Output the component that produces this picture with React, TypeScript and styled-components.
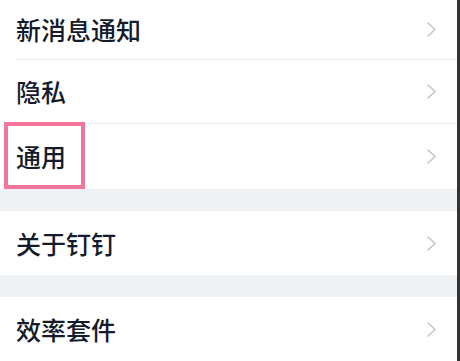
import React from "react";
import styled, { createGlobalStyle } from "styled-components";

const Global = createGlobalStyle`
  html, body { margin: 0; padding: 0; background: #ffffff; }
  body { font-family: "Noto Sans CJK SC", "Noto Sans", sans-serif; }
`;

const Frame = styled.div`
  display: flex;
  width: 460px;
  height: 361px;
  overflow: hidden;
`;

const Screen = styled.div`
  flex: 1;
  display: flex;
  flex-direction: column;
  background: #ffffff;
`;

const Edge = styled.div`
  width: 3px;
  background: #333333;
`;

const Row = styled.div<{ $h: number }>`
  position: relative;
  flex: none;
  height: ${(p) => p.$h}px;
  display: flex;
  align-items: center;
  justify-content: space-between;
  padding: 0 21px 0 16px;
`;

const Label = styled.span`
  font-size: 25px;
  font-weight: 500;
  color: #141b2b;
  line-height: 1;
`;

const Divider = styled.div`
  flex: none;
  height: 1px;
  margin-left: 15px;
  background: #ececee;
`;

const Gap = styled.div`
  flex: none;
  height: 22px;
  background: #eff2f4;
`;

const Highlight = styled.div`
  position: absolute;
  left: 4px;
  top: -2px;
  width: 81px;
  height: 67px;
  box-sizing: border-box;
  border: 4px solid #f2759c;
  pointer-events: none;
`;

const Chevron = () => (
  <svg width="9" height="15" viewBox="0 0 9 15" fill="none">
    <polyline
      points="1,1 8,7.5 1,14"
      stroke="#c2c5ca"
      strokeWidth="1.5"
      strokeLinecap="round"
      strokeLinejoin="round"
    />
  </svg>
);

export default function App() {
  return (
    <Frame>
      <Global />
      <Screen>
        <Row $h={59}>
          <Label>新消息通知</Label>
          <Chevron />
        </Row>
        <Divider />
        <Row $h={63}>
          <Label>隐私</Label>
          <Chevron />
        </Row>
        <Divider />
        <Row $h={65}>
          <Label>通用</Label>
          <Chevron />
          <Highlight />
        </Row>
        <Gap />
        <Row $h={64}>
          <Label>关于钉钉</Label>
          <Chevron />
        </Row>
        <Gap />
        <Row $h={64}>
          <Label>效率套件</Label>
          <Chevron />
        </Row>
      </Screen>
      <Edge />
    </Frame>
  );
}
